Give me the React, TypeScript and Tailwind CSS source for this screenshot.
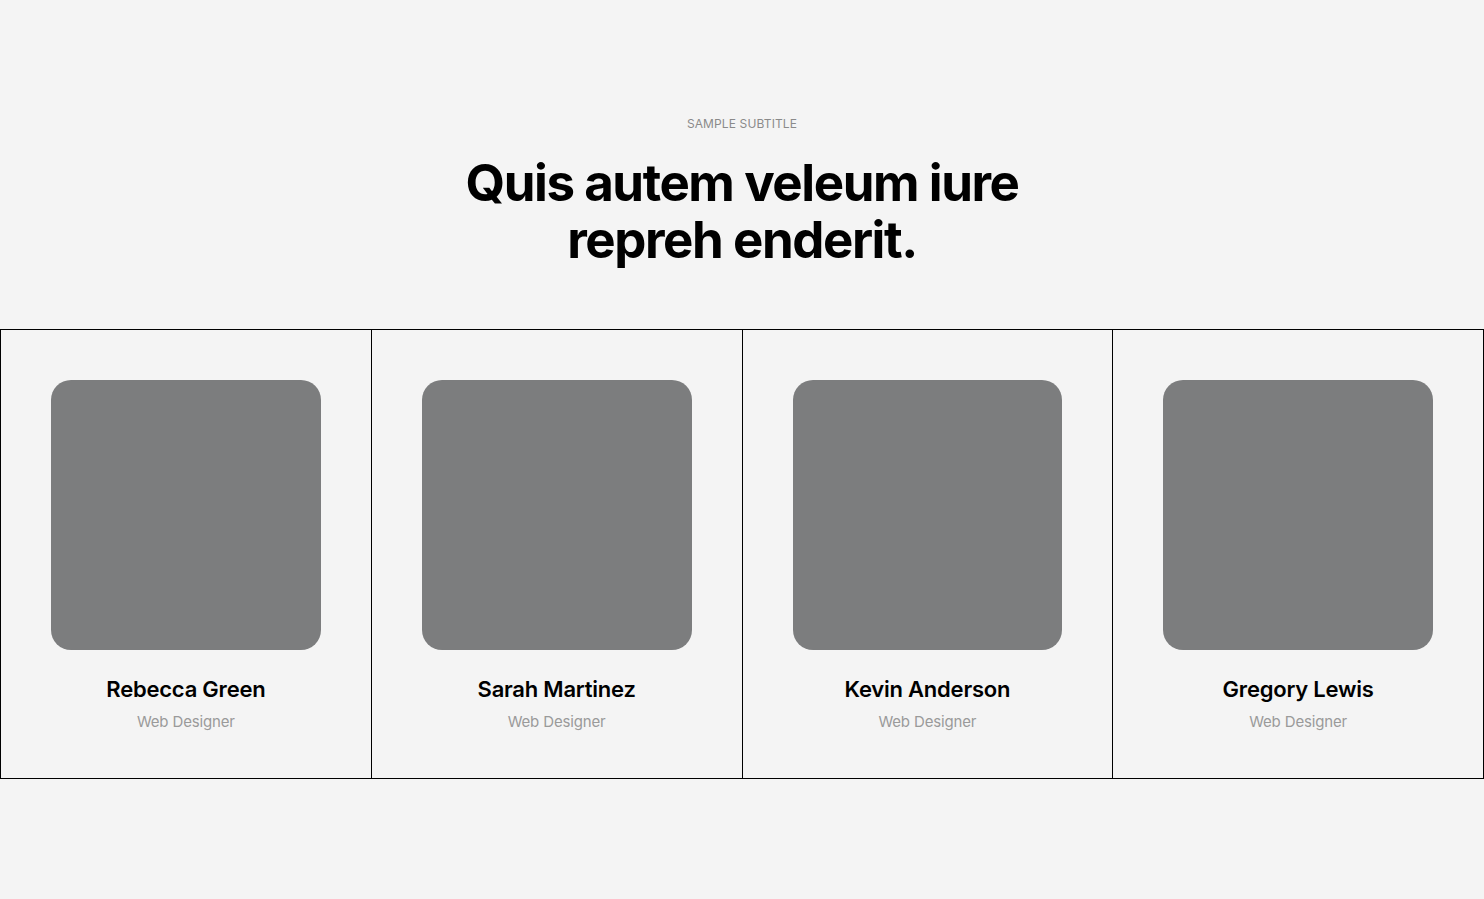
const members = [
  { name: 'Rebecca Green', role: 'Web Designer' },
  { name: 'Sarah Martinez', role: 'Web Designer' },
  { name: 'Kevin Anderson', role: 'Web Designer' },
  { name: 'Gregory Lewis', role: 'Web Designer' },
];

export default function App() {
  return (
    <div className="min-h-screen bg-[#f4f4f4] font-['Inter',sans-serif]">
      <section className="pt-[116px] pb-[120px]">
        <div className="text-center mb-[61px]">
          <p className="text-[12px] leading-[16px] uppercase text-[#8a8a8a] tracking-[0.01em]">
            Sample Subtitle
          </p>
          <h2 className="mt-[22px] text-[51px] leading-[57px] font-bold tracking-[-0.028em] text-black">
            Quis autem veleum iure
            <br />
            repreh enderit.
          </h2>
        </div>

        <div className="grid grid-cols-4 border-t border-b border-l border-black">
          {members.map((m) => (
            <div key={m.name} className="border-r border-black px-[50px] pt-[50px] pb-[46px] flex flex-col items-center">
              <div className="w-full aspect-square rounded-[20px] bg-[#7c7d7e]" />
              <h3 className="mt-[25px] text-[22px] leading-[28px] font-semibold tracking-[-0.01em] text-black">
                {m.name}
              </h3>
              <p className="mt-[9px] text-[15px] leading-[20px] text-[#9a9a9a] tracking-[-0.01em]">
                {m.role}
              </p>
            </div>
          ))}
        </div>
      </section>
    </div>
  );
}
